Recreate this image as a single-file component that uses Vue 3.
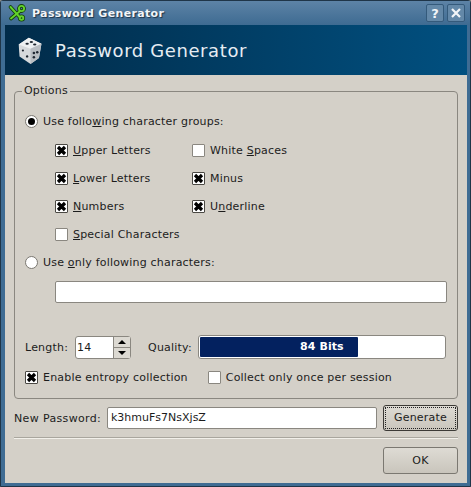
<template>
  <div class="window">
    <div class="titlebar">
      <svg class="app-icon" width="18" height="18" viewBox="0 0 18 18">
        <g fill="none" stroke="#123f0a" stroke-width="3.6" stroke-linecap="round">
          <path d="M2.5 3 L12 13.5" />
          <path d="M11.5 7.5 L3 14.5" />
          <circle cx="13.5" cy="4.5" r="2.6" />
          <circle cx="13.5" cy="14" r="1.8" />
        </g>
        <g fill="none" stroke="#63d22c" stroke-width="1.9" stroke-linecap="round">
          <path d="M2.5 3 L12 13.5" />
          <path d="M11.5 7.5 L3 14.5" />
          <circle cx="13.5" cy="4.5" r="2.6" />
          <circle cx="13.5" cy="14" r="1.8" />
        </g>
      </svg>
      <span class="title-text">Password Generator</span>
      <span class="title-btn">?</span>
      <span class="title-btn close">
        <svg width="12" height="12" viewBox="0 0 12 12">
          <path d="M2 2 L10 10 M10 2 L2 10" stroke="#f2f5f8" stroke-width="2.2" fill="none" />
        </svg>
      </span>
    </div>

    <div class="banner">
      <svg class="dice" width="27" height="29" viewBox="0 0 32 34">
        <path d="M14 2 L29 9 L26 26 L16 33 L3 24 L2 10 Z" fill="#d6d9dc" />
        <path d="M14 2 L29 9 L16 15 L2 10 Z" fill="#eef0f2" />
        <path d="M16 15 L29 9 L26 26 L16 33 Z" fill="#b9bdc2" />
        <g fill="#1f2630">
          <ellipse cx="12" cy="9" rx="2" ry="1.2" />
          <ellipse cx="17" cy="7" rx="2" ry="1.2" />
          <ellipse cx="21" cy="10" rx="2" ry="1.2" />
          <circle cx="7" cy="17" r="1.3" />
          <circle cx="12" cy="24" r="1.4" />
          <circle cx="20" cy="25" r="1.5" />
          <circle cx="24" cy="19" r="1.5" />
          <circle cx="20" cy="20" r="1.5" />
        </g>
      </svg>
      <span class="banner-text">Password Generator</span>
    </div>

    <div class="body">
      <fieldset class="options">
        <legend>Options</legend>

        <label class="row radio-row first">
          <span class="radio on"></span>
          <span>Use follo<u>w</u>ing character groups:</span>
        </label>

        <div class="groups">
          <label v-for="g in groups" :key="g.key" class="row check-row">
            <span class="check" :class="{ on: g.on }">
              <svg v-if="g.on" width="11" height="11" viewBox="0 0 11 11">
                <path d="M2 2 L9 9 M9 2 L2 9" stroke="#000" stroke-width="3.2" />
              </svg>
            </span>
            <span>{{ g.before }}<u>{{ g.u }}</u>{{ g.after }}</span>
          </label>
        </div>

        <label class="row radio-row second">
          <span class="radio"></span>
          <span>Use <u>o</u>nly following characters:</span>
        </label>
        <div class="chars-input"></div>

        <div class="row length-row">
          <span>Length:</span>
          <div class="spin">
            <span class="spin-value">14</span>
            <span class="spin-btns">
              <span class="spin-btn"><i class="up"></i></span>
              <span class="spin-btn"><i class="down"></i></span>
            </span>
          </div>
          <span class="quality-label">Quality:</span>
          <div class="quality">
            <div class="quality-fill" :style="{ width: qualityWidth }"></div>
            <span class="quality-text">84 Bits</span>
          </div>
        </div>

        <div class="row entropy-row">
          <label class="row check-row">
            <span class="check on">
              <svg width="11" height="11" viewBox="0 0 11 11">
                <path d="M2 2 L9 9 M9 2 L2 9" stroke="#000" stroke-width="3.2" />
              </svg>
            </span>
            <span>Enable entropy collection</span>
          </label>
          <label class="row check-row">
            <span class="check"></span>
            <span>Collect only once per session</span>
          </label>
        </div>
      </fieldset>

      <div class="row password-row">
        <span class="password-label">New Password:</span>
        <div class="password-input">k3hmuFs7NsXjsZ</div>
        <button class="btn generate"><span class="focus">Generate</span></button>
      </div>

      <div class="separator"></div>

      <div class="footer">
        <button class="btn ok">OK</button>
      </div>
    </div>
  </div>
</template>

<script setup>
const groups = [
  { key: 'upper', on: true, before: '', u: 'U', after: 'pper Letters' },
  { key: 'white', on: false, before: 'White ', u: 'S', after: 'paces' },
  { key: 'lower', on: true, before: '', u: 'L', after: 'ower Letters' },
  { key: 'minus', on: true, before: 'Minus', u: '', after: '' },
  { key: 'numbers', on: true, before: '', u: 'N', after: 'umbers' },
  { key: 'underline', on: true, before: 'U', u: 'n', after: 'derline' },
  { key: 'special', on: false, before: '', u: 'S', after: 'pecial Characters' }
]

const qualityWidth = '158px'
</script>

<style>
html,
body {
  margin: 0;
  background: #8a8a86;
}
</style>

<style scoped>
.window {
  box-sizing: border-box;
  width: 471px;
  height: 487px;
  display: flex;
  flex-direction: column;
  background: #3f6c93;
  border: 1px solid #1f3548;
  border-radius: 3px 3px 0 0;
  font-family: "DejaVu Sans", sans-serif;
  font-size: 11px;
  letter-spacing: 0.2px;
  color: #1c1c1c;
}

.titlebar {
  height: 24px;
  flex: none;
  display: flex;
  align-items: center;
  padding: 0 5px 0 7px;
  background: linear-gradient(180deg, #5d83a6, #3e6b92);
}

.app-icon {
  margin-right: 6px;
}

.title-text {
  flex: 1;
  color: #f2f5f8;
  font-weight: 700;
  letter-spacing: 0.35px;
  text-shadow: 1px 1px 1px #1c3347;
}

.title-btn {
  width: 16px;
  height: 16px;
  margin-left: 3px;
  display: flex;
  align-items: center;
  justify-content: center;
  border: 1px solid #345a7b;
  border-radius: 2px;
  background: #6388a8;
  color: #f2f5f8;
  font-size: 13px;
  font-weight: 700;
}

.banner {
  height: 50px;
  flex: none;
  margin: 0 3px 0 4px;
  display: flex;
  align-items: center;
  padding-left: 12px;
  background: linear-gradient(90deg, #012b49, #015080);
}

.dice {
  margin-right: 11px;
}

.banner-text {
  color: #e6edf3;
  font-size: 18px;
  letter-spacing: 0.6px;
}

.body {
  flex: 1;
  margin: 0 3px 3px 4px;
  padding: 15px 9px 0 9px;
  background: #d4d0c8;
  display: flex;
  flex-direction: column;
  min-height: 0;
}

.options {
  box-sizing: border-box;
  height: 315px;
  margin: -6px 0 0;
  padding: 0 10px;
  border: 1px solid #8a8780;
  border-radius: 4px;
}

legend {
  padding: 0 2px;
  margin-left: -3px;
  line-height: 14px;
}

.row {
  display: flex;
  align-items: center;
}

.radio-row {
  height: 18px;
  gap: 5px;
}

.radio-row.first {
  margin-top: 14px;
}

.radio-row.second {
  margin-top: 10px;
}

.radio {
  box-sizing: border-box;
  width: 13px;
  height: 13px;
  flex: none;
  border: 1px solid #7b7871;
  border-radius: 50%;
  background: #fff;
  display: flex;
  align-items: center;
  justify-content: center;
}

.radio.on::after {
  content: "";
  width: 7px;
  height: 7px;
  border-radius: 50%;
  background: #000;
}

.groups {
  display: grid;
  grid-template-columns: 137px 1fr;
  row-gap: 10px;
  margin: 11px 0 0 30px;
}

.check-row {
  height: 18px;
  gap: 5px;
}

.check {
  box-sizing: border-box;
  width: 13px;
  height: 13px;
  flex: none;
  border: 1px solid #8a8780;
  border-radius: 1px;
  background: #fff;
  display: flex;
  align-items: center;
  justify-content: center;
}

.check.on {
  border-color: #4a4843;
}

.chars-input {
  box-sizing: border-box;
  height: 22px;
  margin: 10px 0 0 30px;
  width: 392px;
  border: 1px solid #8a8780;
  border-radius: 2px;
  background: #fff;
}

.length-row {
  margin-top: 32px;
  height: 24px;
}

.spin {
  box-sizing: border-box;
  width: 56px;
  height: 23px;
  margin-left: 7px;
  display: flex;
  border: 1px solid #8a8780;
  border-radius: 3px;
  background: #fff;
}

.spin-value {
  flex: 1;
  padding-left: 1px;
  line-height: 21px;
}

.spin-btns {
  width: 16px;
  display: flex;
  flex-direction: column;
  border-left: 1px solid #8a8780;
}

.spin-btn {
  flex: 1;
  display: flex;
  align-items: center;
  justify-content: center;
  background: #dcd9d2;
}

.spin-btn + .spin-btn {
  border-top: 1px solid #8a8780;
}

.spin-btn i {
  width: 0;
  height: 0;
  border-left: 4px solid transparent;
  border-right: 4px solid transparent;
}

.spin-btn .up {
  border-bottom: 4px solid #000;
}

.spin-btn .down {
  border-top: 4px solid #000;
}

.quality-label {
  margin-left: 17px;
}

.quality {
  box-sizing: border-box;
  position: relative;
  width: 248px;
  height: 24px;
  margin-left: 6px;
  padding: 1px;
  border: 1px solid #8a8780;
  border-radius: 3px;
  background: #fff;
}

.quality-fill {
  height: 100%;
  border-radius: 1px;
  background: #03215f;
}

.quality-text {
  position: absolute;
  left: 0;
  top: 0;
  width: 100%;
  text-align: center;
  line-height: 22px;
  color: #fff;
  font-weight: 700;
  letter-spacing: 0.1px;
}

.entropy-row {
  margin-top: 9px;
  gap: 20px;
}

.password-row {
  margin-top: 6px;
  height: 26px;
  letter-spacing: 0.35px;
}

.password-label {
  flex: none;
  width: 88px;
  white-space: nowrap;
}

.password-input {
  box-sizing: border-box;
  width: 270px;
  height: 22px;
  margin-left: 5px;
  padding-left: 3px;
  line-height: 20px;
  border: 1px solid #8a8780;
  border-radius: 2px;
  background: #fff;
  letter-spacing: 0;
}

.btn {
  box-sizing: border-box;
  padding: 0;
  border: 1px solid #7b7871;
  border-radius: 3px;
  background: linear-gradient(180deg, #dedbd4, #c9c5bc);
  font: inherit;
  letter-spacing: 0.2px;
  color: #1c1c1c;
}

.generate {
  width: 75px;
  height: 26px;
  margin-left: 6px;
  border-color: #3c3a36;
  padding: 1px;
}

.focus {
  display: block;
  line-height: 20px;
  border: 1px dotted #222;
  height: 22px;
  box-sizing: border-box;
}

.separator {
  height: 1px;
  margin-top: 6px;
  background: #f2f0ea;
  border-top: 1px solid #a9a69e;
}

.footer {
  display: flex;
  justify-content: flex-end;
  margin-top: 8px;
}

.ok {
  width: 75px;
  height: 27px;
}
</style>
